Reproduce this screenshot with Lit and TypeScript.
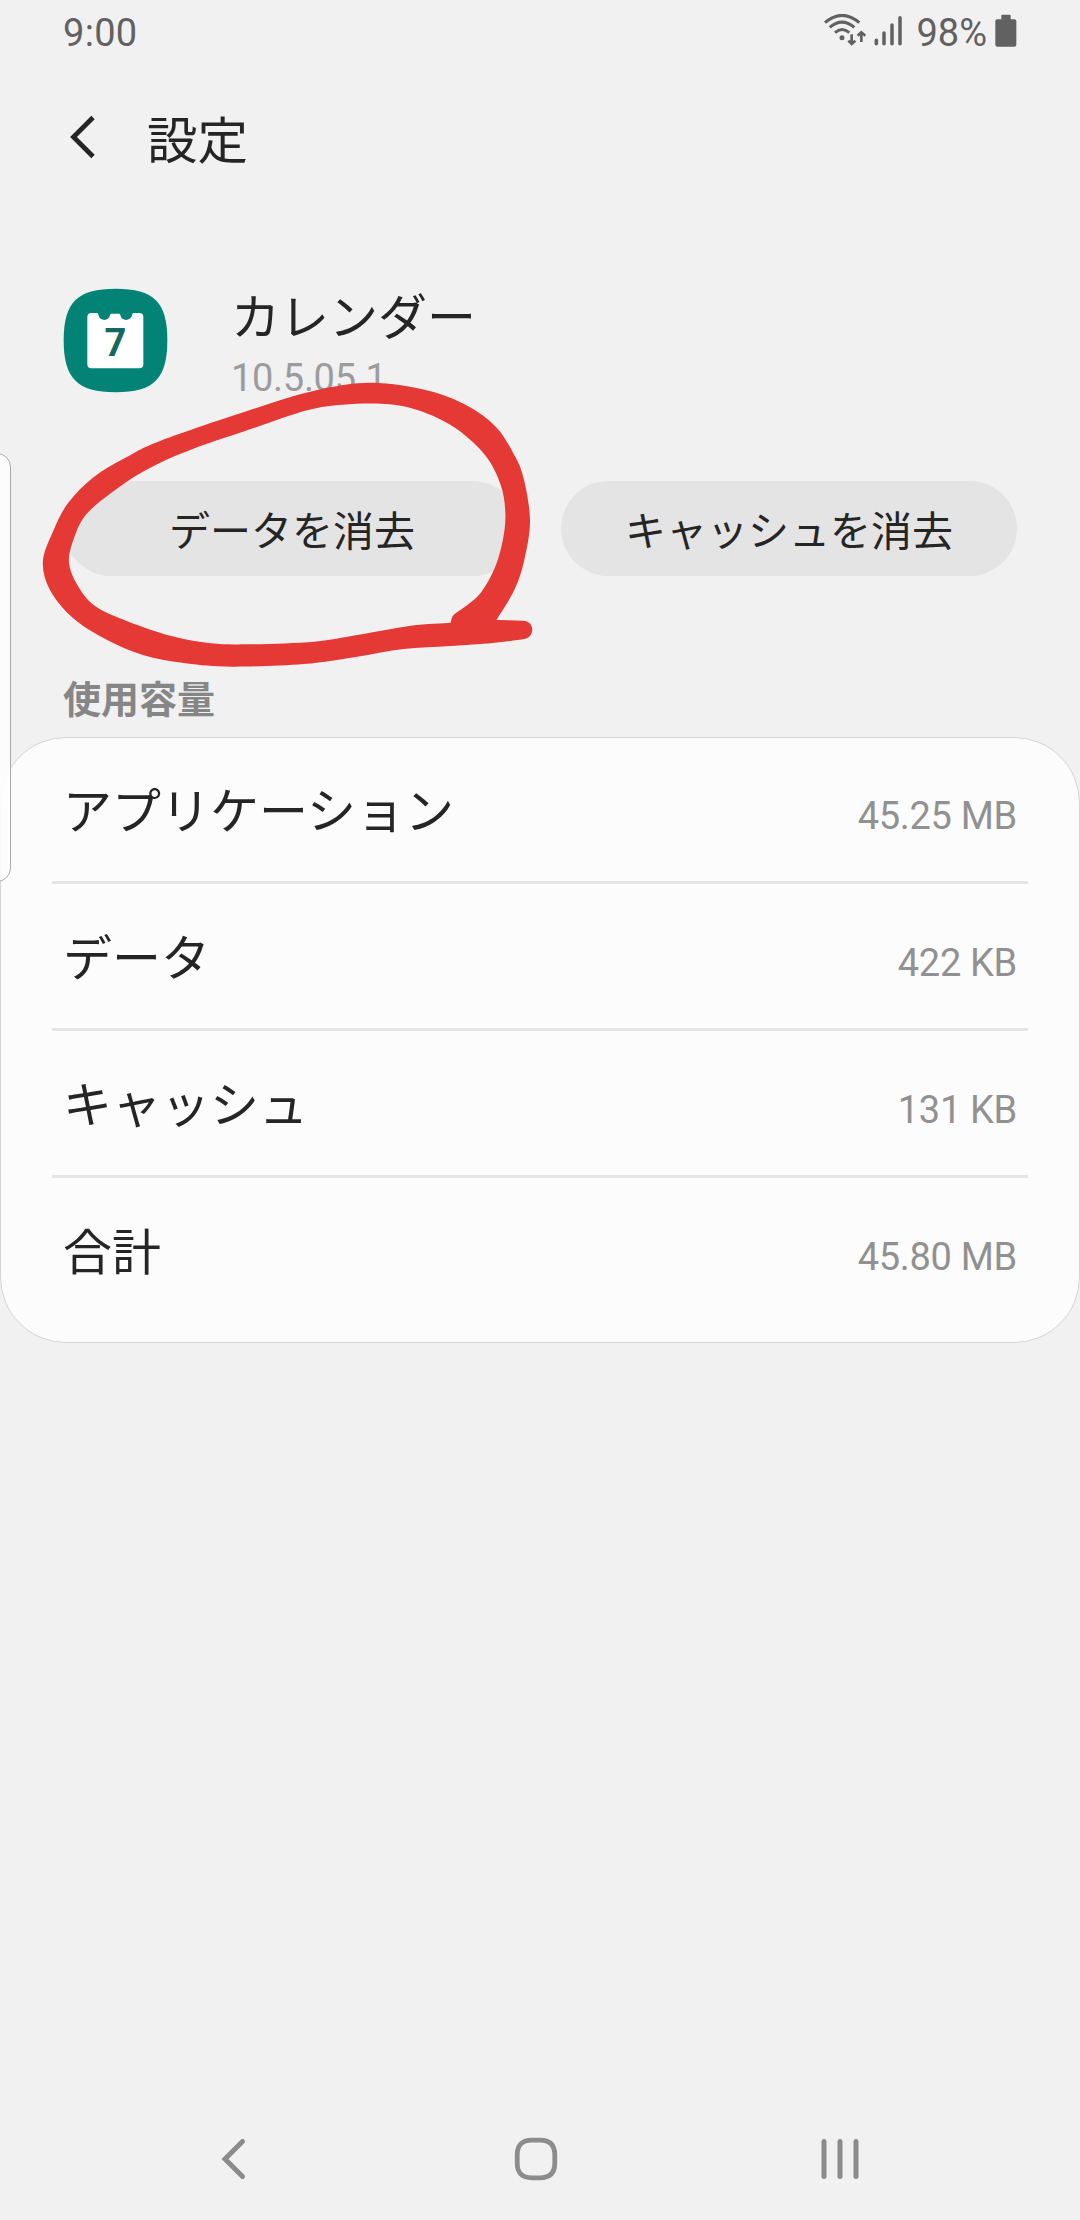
import { LitElement, html, css, svg } from "lit";
import { customElement } from "lit/decorators.js";

interface UsageRow {
  label: string;
  value: string;
}

type Point = [number, number];

const USAGE: UsageRow[] = [
  { label: "アプリケーション", value: "45.25 MB" },
  { label: "データ", value: "422 KB" },
  { label: "キャッシュ", value: "131 KB" },
  { label: "合計", value: "45.80 MB" },
];

/* Outline of the hand-drawn marker: outside edge, then the enclosed hole. */
const MARKER_OUTER: Point[] = [
  [1390, 780], [1440, 690], [1468, 600], [1484, 480], [1465, 350], [1435, 275],
  [1388, 200], [1310, 138], [1200, 92], [1040, 68], [880, 92], [700, 150],
  [450, 242], [350, 294], [260, 353], [190, 430], [148, 515], [120, 605],
  [140, 690], [205, 775], [300, 840], [400, 885], [520, 910], [650, 920],
  [850, 912], [1000, 890], [1130, 867], [1260, 858], [1380, 849], [1468, 837],
];
const MARKER_HOLE: Point[] = [
  [1262, 788], [1150, 797], [1000, 825], [880, 845], [700, 853], [590, 850],
  [480, 828], [360, 785], [265, 737], [215, 672], [193, 605], [207, 535],
  [240, 465], [310, 400], [400, 335], [520, 275], [700, 208], [860, 151],
  [960, 134], [1090, 133], [1190, 158], [1280, 208], [1360, 288], [1402, 375],
  [1415, 460], [1408, 540], [1385, 625], [1345, 700], [1300, 742], [1270, 765],
  [1262, 788],
];

/* Smooth curve through all points (Catmull-Rom converted to cubic Béziers). */
function smooth(points: Point[]): string {
  const last = points.length - 1;
  let d = `M${points[0][0]} ${points[0][1]}`;
  for (let i = 0; i < last; i++) {
    const a = points[Math.max(i - 1, 0)];
    const b = points[i];
    const c = points[i + 1];
    const e = points[Math.min(i + 2, last)];
    d += `C${b[0] + (c[0] - a[0]) / 6} ${b[1] + (c[1] - a[1]) / 6} ${c[0] - (e[0] - b[0]) / 6} ${c[1] - (e[1] - b[1]) / 6} ${c[0]} ${c[1]}`;
  }
  return d;
}

const MARKER_PATH = `${smooth(MARKER_OUTER)}C1499 832 1497 782 1465 782Z${smooth(MARKER_HOLE)}Z`;

const signalBars = [
  [287, 120],
  [310, 98],
  [334, 74],
  [358, 52],
];

@customElement("status-bar")
export class StatusBar extends LitElement {
  static styles = css`
    :host {
      display: flex;
      align-items: center;
      height: 64px;
      padding: 0 63px 0 63px;
      font: 400 38px/64px Roboto, sans-serif;
      color: #616161;
    }
    .clock {
      flex: 1;
      padding-top: 1px;
      letter-spacing: 0.3px;
    }
    .radio {
      display: block;
      width: 80px;
      height: 34px;
      margin-right: 12px;
    }
    .level {
      padding-top: 1px;
      margin-right: 8px;
    }
    .battery {
      display: block;
      width: 22px;
      height: 34px;
    }
    .radio,
    .battery {
      margin-bottom: 2px;
    }
  `;

  render() {
    return html`
      <span class="clock">9:00</span>
      <svg class="radio" viewBox="130 41 240 102" fill="none" stroke="#616161">
        <g stroke-width="9" stroke-linecap="butt">
          <path d="M133 67Q184 23 236 67" />
          <path d="M147 81Q184 50 221 81" />
          <path d="M163 97Q184 78 206 97" />
        </g>
        <circle cx="184" cy="112" r="7.5" fill="#616161" stroke="none" />
        <path d="M213 102V131M203 121L213 131L224 121M242 125V96M231 106L242 96L254 106" stroke-width="8" />
        ${signalBars.map(([x, y]) => svg`<path d="M${x} ${y}V130" stroke-width="10.500" stroke-linecap="round" />`)}
      </svg>
      <span class="level">98%</span>
      <svg class="battery" viewBox="647 41 66 102" fill="#616161">
        <rect x="648" y="57" width="63" height="82" rx="6" />
        <rect x="666" y="43" width="28" height="20" rx="3" />
      </svg>
    `;
  }
}

@customElement("usage-card")
export class UsageCard extends LitElement {
  static styles = css`
    :host {
      display: flex;
      flex-direction: column;
      box-sizing: border-box;
      height: 606px;
      padding: 0 51px;
      border: 1px solid #d4d4d4;
      border-radius: 66px;
      background: #fcfcfc;
    }
    .row {
      display: flex;
      align-items: baseline;
      justify-content: space-between;
      box-sizing: border-box;
      height: 147px;
      padding: 35px 11px 0;
      border-bottom: 3px solid #e5e5e5;
    }
    .row:first-child {
      height: 146px;
      padding-top: 34px;
    }
    .row:last-child {
      border-bottom: 0;
    }
    .label {
      font: 400 49px/72px "Noto Sans CJK JP", sans-serif;
      color: #252525;
    }
    .value {
      font: 400 38px/44px Roboto, sans-serif;
      letter-spacing: -0.3px;
      color: #919191;
    }
  `;

  render() {
    return USAGE.map(
      (row) => html`
        <div class="row">
          <span class="label">${row.label}</span>
          <span class="value">${row.value}</span>
        </div>
      `
    );
  }
}

@customElement("navigation-bar")
export class NavigationBar extends LitElement {
  static styles = css`
    :host {
      display: flex;
      align-items: center;
      justify-content: space-between;
      height: 122px;
      padding: 0 221px;
    }
    .key {
      display: block;
      width: 44px;
      height: 44px;
    }
    .back {
      width: 26px;
      margin-right: 4px;
    }
    .recents {
      width: 38px;
    }
  `;

  render() {
    return html`
      <svg class="key back" viewBox="0 0 26 44" fill="none" stroke="#8c8c8c" stroke-width="5" stroke-linecap="round">
        <path d="M21.500 4.500L4 22L21.500 39.500" />
      </svg>
      <svg class="key" viewBox="0 0 44 44" fill="none" stroke="#8c8c8c" stroke-width="4.800">
        <path
          d="M18 3.200H26C36 3.200 40.800 8 40.800 18V26C40.800 36 36 40.800 26 40.800H18C8 40.800 3.200 36 3.200 26V18C3.200 8 8 3.200 18 3.200Z"
        />
      </svg>
      <svg class="key recents" viewBox="0 0 38 44" stroke="#8c8c8c" stroke-width="5" stroke-linecap="round">
        <path d="M3 4.500V39.500M19 4.500V39.500M35 4.500V39.500" />
      </svg>
    `;
  }
}

@customElement("app-root")
export class AppRoot extends LitElement {
  static styles = css`
    :host {
      position: relative;
      display: flex;
      flex-direction: column;
      width: 1080px;
      height: 2220px;
      overflow: hidden;
      background: #f1f1f1;
      color: #252525;
      font-family: Roboto, "Noto Sans CJK JP", sans-serif;
    }
    .header {
      display: flex;
      align-items: center;
      gap: 52px;
      height: 148px;
      padding-left: 69px;
    }
    .header-back {
      display: block;
      width: 26px;
      height: 44px;
      margin-bottom: 2px;
    }
    .title {
      margin: 0 0 3px;
      font: 400 50.500px/72px "Noto Sans CJK JP", sans-serif;
    }
    .app {
      display: flex;
      align-items: flex-start;
      gap: 63px;
      height: 269px;
      box-sizing: border-box;
      padding: 76px 63px 0;
    }
    .app-icon {
      display: block;
      width: 105px;
      height: 105px;
    }
    .seven {
      font: 700 114px Roboto, sans-serif;
      fill: #14695f;
    }
    .app-name {
      font: 400 49px/72px "Noto Sans CJK JP", sans-serif;
      margin-top: -10px;
    }
    .app-version {
      font: 400 38px/44px Roboto, sans-serif;
      letter-spacing: -0.3px;
      color: #9c9c9c;
      margin-top: 6px;
    }
    .actions {
      display: grid;
      grid-template-columns: 1fr 1fr;
      gap: 41px;
      padding: 0 63px 0 64px;
    }
    .action {
      height: 95px;
      padding: 0;
      border: 0;
      border-radius: 48px;
      background: #e4e4e4;
      color: #252525;
      font: 400 41px/95px "Noto Sans CJK JP", sans-serif;
    }
    .section {
      height: 161px;
      box-sizing: border-box;
      padding: 94px 63px 0;
      font: 700 38px/54px "Noto Sans CJK JP", sans-serif;
      color: #868686;
    }
    .spacer {
      flex: 1;
    }
    .edge-handle {
      position: absolute;
      left: -20px;
      top: 453px;
      box-sizing: border-box;
      width: 31px;
      height: 429px;
      border: 1px solid #aaa;
      border-radius: 14px;
      background: rgba(253, 253, 253, 0.920);
    }
    .marker {
      position: absolute;
      left: 0;
      top: 360px;
      width: 560px;
      height: 330px;
      pointer-events: none;
    }
  `;

  render() {
    return html`
      <status-bar></status-bar>
      <header class="header">
        <svg class="header-back" viewBox="0 0 26 44" fill="none" stroke="#252525" stroke-width="4.800">
          <path d="M24 2.500L4.500 22L24 41.500" />
        </svg>
        <h1 class="title">設定</h1>
      </header>
      <section class="app">
        <svg class="app-icon" viewBox="69 54 315 315">
          <path fill="#028375" d="M227 56C342 56 382 96 382 211S342 367 227 367S71 326 71 211S112 56 227 56Z" />
          <path
            fill="#fff"
            d="M154 129H171Q174 129 175 133C178 155 207 155 210 135Q211 131 214 131H237Q240 131 241 135C244 155 273 155 277 133Q278 129 281 129H298Q310 129 310 141V283Q310 295 298 295H154Q142 295 142 283V141Q142 129 154 129Z"
          />
          <text class="seven" x="226" y="257" text-anchor="middle">7</text>
        </svg>
        <div>
          <div class="app-name">カレンダー</div>
          <div class="app-version">10.5.05.1</div>
        </div>
      </section>
      <div class="actions">
        <button class="action">データを消去</button>
        <button class="action">キャッシュを消去</button>
      </div>
      <div class="section">使用容量</div>
      <usage-card></usage-card>
      <div class="spacer"></div>
      <navigation-bar></navigation-bar>
      <div class="edge-handle"></div>
      <svg class="marker" viewBox="0 0 1568 990" preserveAspectRatio="none">
        <path fill="#e53935" fill-rule="evenodd" d=${MARKER_PATH} />
      </svg>
    `;
  }
}
